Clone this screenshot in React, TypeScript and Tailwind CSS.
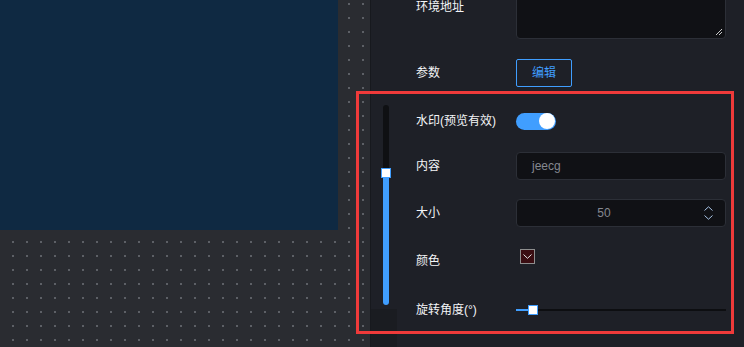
import type { ReactNode } from "react"

const font = "font-['Liberation_Sans','Noto_Sans_CJK_SC',sans-serif]"

function Row({ label, children, className }: { label: string; children: ReactNode; className: string }) {
	return (
		<div className={`flex items-center ${className}`}>
			<div className="w-[100px] shrink-0 text-[12px] leading-[18px] text-[#f4f5f7]">{label}</div>
			<div className="flex w-[210px] items-center">{children}</div>
		</div>
	)
}

function ZoomSlider() {
	return (
		<div className="flex h-full w-[26px] flex-col">
			<div className="relative mt-[105px] ml-[12px] flex h-[200px] w-[6px] flex-col justify-end rounded-full bg-[#0f1013]">
				<div className="h-[132px] w-full rounded-b-full bg-[#409eff]" />
				<div className="absolute top-[63px] left-[-2px] h-[10px] w-[10px] border border-[#409eff] bg-white" />
			</div>
			<div className="mt-auto h-[38px] w-full bg-[#1a1c21]" />
		</div>
	)
}

function WatermarkForm() {
	return (
		<div className="flex flex-1 flex-col pl-[19px]">
			<div className="-mt-[26px] flex h-[65px]">
				<div className="w-[100px] shrink-0 pt-[24px] text-[12px] leading-[18px] text-[#f4f5f7]">环境地址</div>
				<div className="relative h-full w-[210px] rounded-[4px] border border-[#2c2f37] bg-[#101115]">
					<svg className="absolute right-[2px] bottom-[2px]" width="9" height="9" viewBox="0 0 9 9">
						<path d="M8 2 L2 8 M8 5 L5 8" stroke="#c9c9c9" strokeWidth="1" />
					</svg>
				</div>
			</div>

			<Row label="参数" className="mt-[20px] h-[28px]">
				<button
					type="button"
					className="h-[28px] w-[56px] rounded-[2px] border border-[#409eff] text-[12px] text-[#409eff]"
				>
					编辑
				</button>
			</Row>

			<Row label="水印(预览有效)" className="mt-[20px] h-[28px]">
				<div className="flex h-[17px] w-[40px] items-center justify-end rounded-full bg-[#409eff] pr-[1px]">
					<div className="h-[16px] w-[16px] rounded-full bg-white" />
				</div>
			</Row>

			<Row label="内容" className="mt-[17px] h-[28px]">
				<div className="flex h-[28px] w-full items-center rounded-[4px] border border-[#2c2f37] bg-[#101115] pl-[15px] text-[12px] text-[#858890]">
					jeecg
				</div>
			</Row>

			<Row label="大小" className="mt-[19px] h-[28px]">
				<div className="flex h-[28px] w-full items-center rounded-[4px] border border-[#2c2f37] bg-[#101115] text-[12px] text-[#858890]">
					<div className="flex-1 pl-[2px] text-center">50</div>
					<div className="flex w-[36px] flex-col items-center gap-[4px] pl-[3px]">
						<svg width="9" height="5" viewBox="0 0 9 5">
							<path d="M0.5 4.5 L4.5 0.8 L8.5 4.5" fill="none" stroke="#a8c4e6" strokeWidth="1" />
						</svg>
						<svg width="9" height="5" viewBox="0 0 9 5">
							<path d="M0.5 0.5 L4.5 4.2 L8.5 0.5" fill="none" stroke="#a8c4e6" strokeWidth="1" />
						</svg>
					</div>
				</div>
			</Row>

			<div className="mt-[18px] flex h-[28px] items-start">
				<div className="w-[100px] shrink-0 pt-[7px] text-[12px] leading-[18px] text-[#f4f5f7]">颜色</div>
				<div className="mt-[4px] ml-[4px] flex h-[15px] w-[15px] items-center justify-center border border-[#8e8e8e] bg-[#3a0d12]">
					<svg width="9" height="5" viewBox="0 0 9 5">
						<path d="M0.5 0.5 L4.5 4.3 L8.5 0.5" fill="none" stroke="#e6e6e6" strokeWidth="1" />
					</svg>
				</div>
			</div>

			<Row label="旋转角度(°)" className="mt-[23px] h-[28px]">
				<div className="relative flex h-[10px] w-full items-center">
					<div className="h-[2px] w-[14px] bg-[#409eff]" />
					<div className="h-[2px] flex-1 bg-[#0d0e11]" />
					<div className="absolute left-[12px] h-[10px] w-[10px] border border-[#409eff] bg-white" />
				</div>
			</Row>
		</div>
	)
}

export default function App() {
	return (
		<div className={`relative flex h-[347px] w-[744px] overflow-hidden ${font}`}>
			<div className="h-full w-[370px] shrink-0 bg-[#2a2c31] bg-[linear-gradient(to_bottom,transparent_2px,#2a2c31_2px),linear-gradient(to_right,#5d6066_2px,transparent_2px)] bg-[length:14px_14px] bg-[position:12px_3px]">
				<div className="h-[230px] w-[338px] bg-[#0f2942]" />
			</div>
			<div className="flex h-full flex-1 border-l border-[#17191e] bg-[#1e2027]">
				<ZoomSlider />
				<WatermarkForm />
			</div>
			<div className="pointer-events-none absolute top-[91px] left-[356px] h-[243px] w-[378px] border-[3px] border-[#ef3a3a]" />
		</div>
	)
}
